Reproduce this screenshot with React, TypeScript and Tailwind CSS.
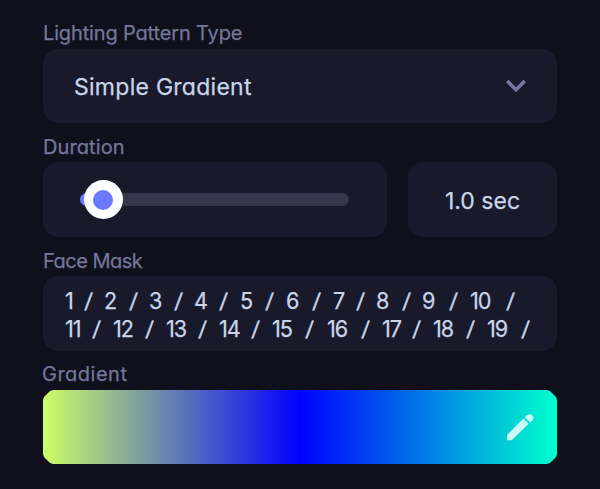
import type { ReactNode } from "react";

type Cell = { label: string; start: number; slash: number };

const ROW_ONE: Cell[] = [
  { label: "1", start: 65, slash: 85 },
  { label: "2", start: 104, slash: 130 },
  { label: "3", start: 149, slash: 175 },
  { label: "4", start: 194, slash: 220 },
  { label: "5", start: 240, slash: 266 },
  { label: "6", start: 286, slash: 313 },
  { label: "7", start: 333, slash: 357 },
  { label: "8", start: 376, slash: 403 },
  { label: "9", start: 422, slash: 450 },
  { label: "10", start: 470, slash: 507 },
];

const ROW_TWO: Cell[] = [
  { label: "11", start: 65, slash: 93 },
  { label: "12", start: 113, slash: 146 },
  { label: "13", start: 166, slash: 199 },
  { label: "14", start: 219, slash: 252 },
  { label: "15", start: 272, slash: 306 },
  { label: "16", start: 327, slash: 362 },
  { label: "17", start: 382, slash: 413 },
  { label: "18", start: 433, slash: 467 },
  { label: "19", start: 487, slash: 522 },
];

function Label({ children, className }: { children: ReactNode; className: string }) {
  return (
    <div className={`whitespace-nowrap text-[20px] leading-[26px] text-[#74779a] ${className}`}>
      {children}
    </div>
  );
}

function MaskRow({ cells }: { cells: Cell[] }) {
  return (
    <div className="flex h-7 whitespace-nowrap text-[23px] leading-7">
      {cells.map((c, i) => {
        const end = cells[i + 1]?.start ?? c.slash + 15;
        return (
          <div key={c.label} className="flex shrink-0">
            <span
              className="shrink-0 origin-left scale-x-[0.94] tracking-[-1px]"
              style={{ width: c.slash - c.start }}
            >
              {c.label}
            </span>
            <span className="shrink-0 text-[20px]" style={{ width: end - c.slash }}>
              <span className="inline-block -skew-x-6 [-webkit-text-stroke-width:0.5px]">/</span>
            </span>
          </div>
        );
      })}
    </div>
  );
}

export default function App() {
  return (
    <main className="h-[489px] w-[600px] overflow-hidden bg-[#100f1c] px-[43px] pt-[20px] font-['Inter',sans-serif] [font-feature-settings:'cv11'] [-webkit-text-stroke-width:0.25px] text-[#c8d5e8]">
      <Label className="mb-[3px] tracking-[-0.15px]">Lighting Pattern Type</Label>
      <div className="flex h-[74px] items-center justify-between rounded-[15px] bg-[#18192b] pl-[31px] pr-[31px]">
        <span className="pt-[2px] text-[23px] leading-7 tracking-[0.27px]">Simple Gradient</span>
        <svg className="h-[14px] w-[20px]" viewBox="0 0 20 14" fill="none">
          <path d="M1.3 2 L10 10.7 L18.7 2" stroke="#74779a" strokeWidth="3.6" />
        </svg>
      </div>

      <Label className="mt-[11px] mb-[2px] tracking-[0.1px]">Duration</Label>
      <div className="flex gap-[21px]">
        <div className="flex h-[75px] w-[344px] items-center rounded-[15px] bg-[#18192b] pl-[37px]">
          <div className="flex h-[13px] w-[269px] items-center rounded-full bg-[#36364c]">
            <div className="h-[13px] w-5 rounded-l-full bg-[#6b79ff]" />
            <div className="-ml-4 flex size-[39px] shrink-0 items-center justify-center rounded-full bg-white">
              <div className="mr-px size-[20px] rounded-full bg-[#6b79ff]" />
            </div>
          </div>
        </div>
        <div className="flex h-[75px] w-[149px] items-center justify-center rounded-[15px] bg-[#18192b] pt-[2px] text-[23px] leading-7">
          1.0 sec
        </div>
      </div>

      <Label className="mt-[11px] mb-[2px] tracking-[-0.5px]">Face Mask</Label>
      <div className="h-[75px] overflow-hidden rounded-[15px] bg-[#18192b] pl-[22px] pt-[11px]">
        <MaskRow cells={ROW_ONE} />
        <MaskRow cells={ROW_TWO} />
      </div>

      <Label className="mt-[10px] mb-[3px] -ml-px tracking-[0.5px]">Gradient</Label>
      <div className="flex h-[74px] items-center justify-end bg-[linear-gradient(90deg,#ccff66_0%,#0000ff_50%,#00ffcc_100%)] pr-[23px] [clip-path:polygon(10px_0,504px_0,507px_1px,513px_7px,514px_10px,514px_64px,513px_67px,507px_73px,504px_74px,10px_74px,7px_73px,1px_67px,0_64px,0_10px,1px_7px,7px_1px)]">
        <svg className="h-[27px] w-[27px]" viewBox="0 0 27 27" fill="#ccfaf7">
          <path d="M0 21 L16.3 4.6 L21.6 9.8 L5.5 25.5 L4.5 26.3 H0 Z" />
          <path d="M17.8 3.4 L20 1.3 Q23 -.9 25.5 1.6 Q27.6 4 25.4 6.6 L23.2 8.6 Z" />
        </svg>
      </div>
    </main>
  );
}
